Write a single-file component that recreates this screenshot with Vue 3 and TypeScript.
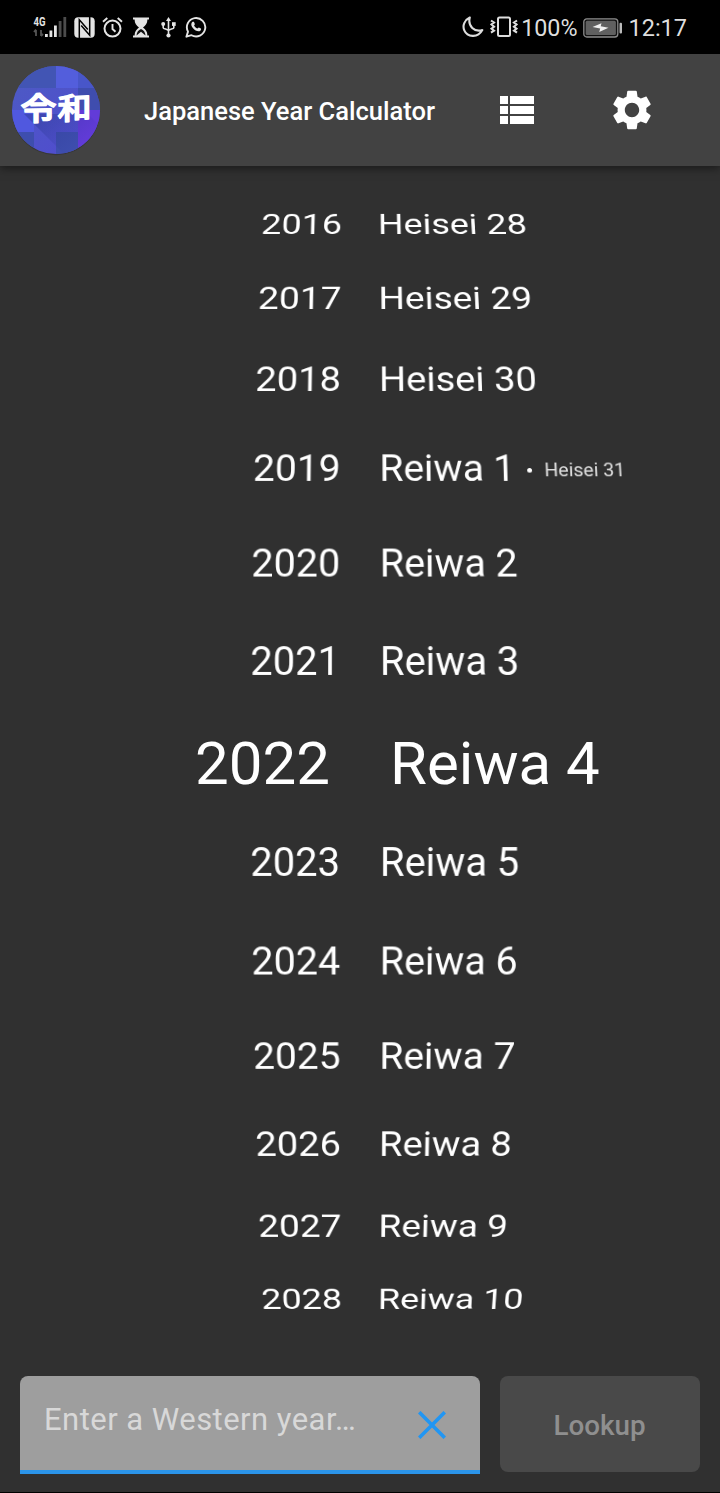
<script setup lang="ts">
interface YearRow {
  year: number
  era: string
  alt?: string
}

const years: YearRow[] = [
  { year: 2016, era: 'Heisei 28' },
  { year: 2017, era: 'Heisei 29' },
  { year: 2018, era: 'Heisei 30' },
  { year: 2019, era: 'Reiwa 1', alt: 'Heisei 31' },
  { year: 2020, era: 'Reiwa 2' },
  { year: 2021, era: 'Reiwa 3' },
  { year: 2022, era: 'Reiwa 4' },
  { year: 2023, era: 'Reiwa 5' },
  { year: 2024, era: 'Reiwa 6' },
  { year: 2025, era: 'Reiwa 7' },
  { year: 2026, era: 'Reiwa 8' },
  { year: 2027, era: 'Reiwa 9' },
  { year: 2028, era: 'Reiwa 10' },
]

const selected = 6
const rowHeight = 48

// Wheel projection by distance from the selected row
const offsets = [0, 100.5, 199.2, 293.8, 382.4, 464.3, 537.6]
const verticalScale = [1.5, 0.995, 0.966, 0.914, 0.845, 0.767, 0.695]
const curvature = 0.92
const step = 0.0842

function centre(i: number): number {
  const d = i - selected
  return (d === 0 ? 598 : 596.9) + Math.sign(d) * offsets[Math.abs(d)]
}

function rowStyle(i: number) {
  const d = i - selected
  const n = Math.abs(d)
  const sx = n === 0 ? 1.5 : 1 / (1 + curvature * (1 - Math.cos(step * n)))
  const lean = (Math.sin(step * d) * curvature) / 1200
  const before = i === 0 ? centre(0) - rowHeight / 2 : centre(i) - centre(i - 1) - rowHeight
  return {
    marginTop: `${before.toFixed(2)}px`,
    transform: `matrix3d(${sx},0,0,0,0,${verticalScale[n]},0,${lean},0,0,1,0,0,0,0,1)`,
  }
}
</script>

<template>
  <div class="screen">
    <div class="status">
      <div class="status-left">
        <svg class="signal" width="34" height="22" viewBox="0 0 34 22">
          <text x="0.500" y="10" font-size="12.5" font-weight="700" fill="#e4e4e4" textLength="12" lengthAdjust="spacingAndGlyphs">4G</text>
          <path d="M3 20v-6M1 16l2-2.500M8 14v6M8 20l2-2" stroke="#555" stroke-width="1.800" fill="none" />
          <path d="M12 18h2.800v3H12zM16.500 14.500h2.800V21h-2.800zM21 9.500h2.800V21H21z" fill="#e4e4e4" />
          <path d="M25.700 5h2.800v16h-2.800zM30.400 1h2.800v20h-2.800z" fill="#4c4c4c" />
        </svg>
        <svg class="nfc" width="21" height="21" viewBox="0 0 21 21">
          <rect x="0.300" y="0.300" width="20.400" height="20.400" rx="4" fill="#e4e4e4" />
          <path d="M5.300 21V2.800L13.800 12.500" stroke="#000" stroke-width="1.500" fill="none" />
          <path d="M7.200 8.500 15.700 18.200V0" stroke="#000" stroke-width="1.500" fill="none" />
        </svg>
        <svg class="alarm" width="21" height="21" viewBox="0 0 21 21">
          <circle cx="10.500" cy="11.600" r="8" stroke="#e4e4e4" stroke-width="2" fill="none" />
          <path d="M10.500 7v5l3 2.800M1 4.800 5.300 1M20 4.800 15.700 1" stroke="#e4e4e4" stroke-width="1.900" fill="none" />
        </svg>
        <svg class="hourglass" width="16" height="21" viewBox="0 0 16 21">
          <path d="M0 .5h16v2h-1.600c0 4-1.900 6-4.400 8 2.500 2 4.400 4 4.400 8H16v2H0v-2h1.600c0-4 1.900-6 4.400-8-2.500-2-4.400-4-4.400-8H0z" fill="#e4e4e4" />
          <path d="M3.500 18.500c.2-3.500 2-5.500 4.500-6.500 2.500 1 4.300 3 4.500 6.500L8 14.800z" fill="#111" />
        </svg>
        <svg class="usb" width="15" height="21" viewBox="0 0 15 21">
          <path d="M7.500 3v15M2.200 7.500v3.200c0 1.300 5.300 1.600 5.300 3.300 0-1.700 5.300-2 5.300-3.300V7.500" stroke="#e4e4e4" stroke-width="1.600" fill="none" />
          <path d="m7.500 0 2.500 4H5z" fill="#e4e4e4" />
          <circle cx="2.200" cy="7" r="2" fill="#e4e4e4" />
          <rect x="11" y="5.200" width="3.700" height="3.700" fill="#e4e4e4" />
          <circle cx="7.500" cy="18.500" r="2.100" fill="#e4e4e4" />
        </svg>
        <svg class="whatsapp" width="22" height="22" viewBox="0 0 22 22">
          <path d="M1.400 20.700 3 15.600a9.200 9.200 0 1 1 3.500 3.600z" stroke="#e4e4e4" stroke-width="1.900" stroke-linejoin="round" fill="none" />
          <path d="M7.600 5.800c.5-.3 1.200-.2 1.400.3l.8 1.800c.2.500-.8 1.300-.7 1.700.7 1.400 1.700 2.300 3.200 3 .5.100 1.100-1.200 1.600-1l2 1c.5.300.1 1.600-.5 2.100-3.500 2.600-10.700-3.900-8.800-7.700.2-.5.600-.9 1-1.200z" fill="#e4e4e4" />
        </svg>
      </div>
      <div class="status-right">
        <svg class="moon" width="22" height="22" viewBox="0 0 22 22">
          <path d="M7.800 1.500C2.500 4 .2 9.500 2.300 14.300c2.800 6.700 13.500 8.200 18-.2C12.500 16.500 5.500 10 7.800 1.500z" stroke="#dedede" stroke-width="2.100" stroke-linejoin="round" fill="none" />
        </svg>
        <svg class="vibrate" width="28" height="22" viewBox="0 0 28 22">
          <rect x="8" y="1.500" width="12" height="18.500" rx="1.500" stroke="#dedede" stroke-width="2" fill="none" />
          <path d="m1 4.500 3 2-2.500 2 2.500 2.200-2.500 2 2.500 2-3 2M27 4.500l-3 2 2.500 2-2.500 2.200 2.500 2-2.500 2 3 2" stroke="#dedede" stroke-width="2.100" fill="none" />
        </svg>
        <span class="percent">100%</span>
        <svg class="battery" width="40" height="20" viewBox="0 0 40 20">
          <rect x="0.800" y="0.800" width="34" height="18.200" rx="3" fill="#111" stroke="#8c8c8c" stroke-width="1.300" />
          <rect x="2.700" y="2.700" width="30.200" height="14.400" rx="1.500" fill="#606060" />
          <path d="m9.500 9 9-3.700-.8 2.900 7.800 1.600-9.300 4.200 1-3.500z" fill="#f0f0f0" />
          <rect x="36.500" y="4.800" width="2.500" height="10.600" rx="1" fill="#bbb" />
        </svg>
        <span class="clock">12:17</span>
      </div>
    </div>

    <header class="bar">
      <svg class="logo" width="92" height="94" viewBox="0 0 92 94">
        <defs>
          <clipPath id="disc"><circle cx="46" cy="46" r="44" /></clipPath>
          <linearGradient id="indigo" x1="0" y1="0" x2="1" y2="1">
            <stop offset="0" stop-color="#4c5cc3" />
            <stop offset="1" stop-color="#5149d0" />
          </linearGradient>
          <linearGradient id="cast" gradientUnits="userSpaceOnUse" x1="30" y1="46" x2="65" y2="88">
            <stop offset="0" stop-color="#28358f" stop-opacity="0.450" />
            <stop offset="1" stop-color="#28358f" stop-opacity="0" />
          </linearGradient>
        </defs>
        <circle cx="46" cy="47.200" r="44" fill="#2a2a2a" opacity="0.450" />
        <g clip-path="url(#disc)">
          <path d="M0 0h92v92H0z" fill="url(#indigo)" />
          <path d="M0 0h46v24H0z" fill="#4255b4" />
          <path d="M46 0h22v24H46z" fill="#535edc" />
          <path d="M68 0h24v24H68z" fill="#4856c9" />
          <path d="M68 24h24v22H68z" fill="#3f4dae" />
          <path d="M0 46h24v22H0z" fill="#5058df" />
          <path d="M68 46h24v46H68z" fill="#623bd8" />
          <path d="M0 68h24v24H0zM46 68h22v24H46z" fill="#3e4eae" />
          <path d="M14 50 56 92h36V64L78 50z" fill="url(#cast)" />
        </g>
        <g class="kanji">
          <text transform="matrix(1 -0.020 0 0.880 10.500 56.500)" textLength="36" lengthAdjust="spacingAndGlyphs">令</text>
          <text transform="matrix(1 -0.060 0 0.830 47.500 56)" textLength="34" lengthAdjust="spacingAndGlyphs">和</text>
        </g>
      </svg>
      <h1>Japanese Year Calculator</h1>
      <svg class="list-icon" width="34" height="28" viewBox="0 0 34 28" fill="#fff">
        <path d="M0 0h8v8H0zM10 0h24v8H10zM0 10h8v8H0zM10 10h24v8H10zM0 20h8v8H0zM10 20h24v8H10z" />
      </svg>
      <svg class="gear" width="48" height="48" viewBox="0 0 24 24" fill="#fff">
        <path d="M19.140 12.940c.040-.3.060-.61.060-.94 0-.32-.020-.64-.070-.94l2.030-1.580c.18-.14.230-.41.120-.61l-1.920-3.320c-.12-.22-.37-.29-.59-.22l-2.390.96c-.5-.38-1.030-.7-1.620-.94l-.36-2.540c-.040-.24-.24-.41-.48-.41h-3.840c-.24 0-.43.17-.47.41l-.36 2.540c-.59.240-1.130.570-1.620.940l-2.390-.96c-.22-.080-.47 0-.59.220L2.740 8.870c-.12.210-.080.470.120.610l2.030 1.580c-.050.3-.090.630-.090.940s.020.640.070.940l-2.030 1.580c-.18.140-.23.410-.12.610l1.920 3.320c.12.220.37.290.59.220l2.390-.96c.5.380 1.030.7 1.620.940l.36 2.540c.050.240.240.410.480.410h3.840c.24 0 .44-.17.470-.41l.36-2.540c.59-.24 1.130-.56 1.620-.94l2.390.960c.22.080.47 0 .59-.22l1.920-3.320c.12-.22.070-.47-.12-.61zM12 15.600c-1.980 0-3.600-1.620-3.600-3.600s1.620-3.600 3.600-3.600 3.600 1.620 3.600 3.600-1.620 3.600-3.600 3.600z" />
      </svg>
    </header>

    <main class="wheel">
      <div v-for="(row, i) in years" :key="row.year" class="row" :style="rowStyle(i)">
        <span class="year">{{ row.year }}</span>
        <span class="era">{{ row.era }}</span>
        <template v-if="row.alt">
          <i class="dot"></i>
          <span class="alt">{{ row.alt }}</span>
        </template>
      </div>
    </main>

    <footer class="entry">
      <div class="field">
        <span class="hint">Enter a Western year…</span>
        <svg class="clear" width="28" height="28" viewBox="0 0 28 28">
          <path d="m1.200 1.200 25.600 25.600M26.800 1.200 1.200 26.800" stroke="#2196f3" stroke-width="3.600" />
        </svg>
      </div>
      <button class="lookup" type="button">Lookup</button>
    </footer>
  </div>
</template>

<style>
body {
  background: #303030;
}
</style>

<style scoped>
.screen {
  width: 720px;
  height: 1493px;
  box-sizing: border-box;
  display: flex;
  flex-direction: column;
  overflow: hidden;
  background: #303030;
  border-bottom: 1px solid #000;
  color: #fff;
  font-family: Roboto, "Liberation Sans", "Noto Sans CJK JP", sans-serif;
}
.status {
  flex: none;
  height: 54px;
  display: flex;
  justify-content: space-between;
  background: #000;
  color: #dedede;
  font-size: 23.5px;
  line-height: 56px;
}
.status-left,
.status-right {
  display: flex;
  align-items: flex-start;
}
.status-left svg {
  margin-top: 16.5px;
}
.signal { overflow: visible; }
.status-left .signal { margin: 16px 0 0 33px; }
.nfc { margin-left: 6.5px; }
.alarm { margin-left: 7px; }
.hourglass { margin-left: 10px; }
.usb { margin-left: 12px; }
.status-left .whatsapp { margin: 16px 0 0 9.5px; }
.status-right { padding-right: 33px; }
.moon { margin: 16px 6px 0 0; }
.vibrate { margin: 16px 3.5px 0 0; }
.percent { font-size: 23.3px; }
.battery { margin: 17.5px 5px 0 6px; }
.bar {
  flex: none;
  height: 112px;
  display: flex;
  align-items: center;
  background: #424242;
  box-shadow: 0 2px 9px rgba(0, 0, 0, 0.5);
  z-index: 1;
}
.logo { margin: 2px 0 0 10px; }
.kanji {
  font-family: "Noto Sans CJK JP", sans-serif;
  font-size: 36px;
  font-weight: 500;
  fill: #fff;
  stroke: #fff;
  stroke-width: 1.7px;
  stroke-linejoin: round;
}
h1 {
  width: 300px;
  margin: 2px 0 0 42px;
  font-size: 25.53px;
  font-weight: 500;
  white-space: nowrap;
}
.list-icon { margin-left: 56px; }
.gear { margin-left: 74px; }
.wheel {
  flex: none;
  height: 1191px;
}
.row {
  display: flex;
  align-items: center;
  height: 48px;
  line-height: 48px;
  font-size: 40px;
  white-space: nowrap;
  transform-origin: 360px 23.5px;
}
.year {
  width: 90px;
  margin: 0 40px 0 250px;
}
.dot {
  width: 5px;
  height: 5px;
  margin: 2px 13px 0 12px;
  border-radius: 50%;
  background: #fff;
}
.alt {
  padding-top: 1.5px;
  font-size: 20px;
  color: #e0e0e0;
}
.entry {
  display: flex;
  gap: 20px;
  padding: 19px 20px 0;
}
.field {
  box-sizing: border-box;
  width: 460px;
  height: 98px;
  display: flex;
  align-items: center;
  justify-content: space-between;
  padding: 0 34px 0 24px;
  background: #9e9e9e;
  border-bottom: 4px solid #2b94e9;
  border-radius: 8px 8px 0 0;
}
.hint {
  margin-top: -7px;
  font-size: 31px;
  letter-spacing: 0.46px;
  color: #d8d8d8;
}
.clear { margin-top: 3px; }
.lookup {
  width: 200px;
  height: 96px;
  padding: 2px 1px 0 0;
  border: 0;
  border-radius: 8px;
  background: #494949;
  color: #8f8f8f;
  font: 500 27.8px Roboto, "Liberation Sans", sans-serif;
}
</style>
